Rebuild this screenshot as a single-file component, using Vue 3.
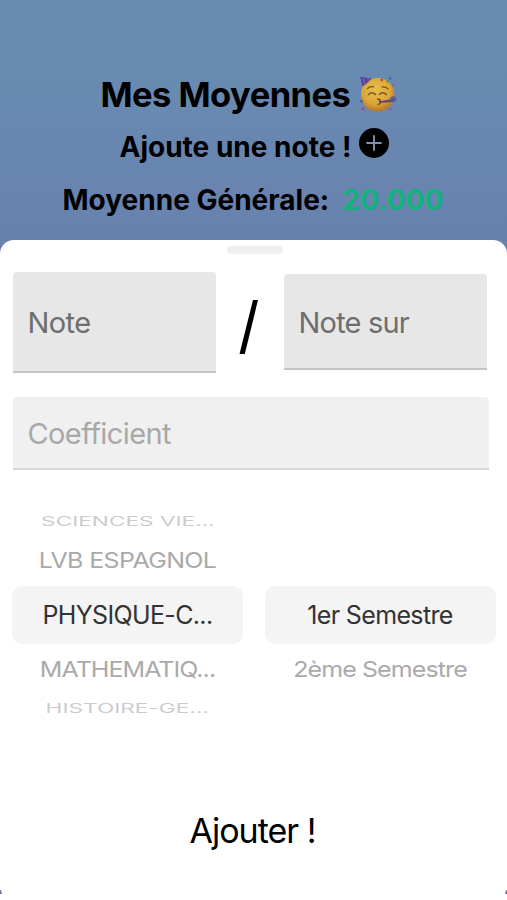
<script setup>
import { ref } from 'vue'

const subjects = [
  { label: 'SCIENCES VIE...', kind: 'far top' },
  { label: 'LVB ESPAGNOL', kind: 'near lvb' },
  { label: 'PHYSIQUE-C...', kind: 'selected' },
  { label: 'MATHEMATIQ...', kind: 'near math' },
  { label: 'HISTOIRE-GE...', kind: 'far bottom' },
]
const terms = [
  { label: '1er Semestre', kind: 'selected' },
  { label: '2ème Semestre', kind: 'near sem' },
]
const note = ref('')
const noteMax = ref('')
const coefficient = ref('')
</script>

<template>
  <main class="screen">
    <header class="header">
      <h1 class="title">
        <span>Mes Moyennes</span>
        <svg class="party" viewBox="0 0 38 38" aria-hidden="true">
          <defs>
            <radialGradient id="face" cx="45%" cy="35%" r="65%">
              <stop offset="0" stop-color="#e6c04c" />
              <stop offset="0.65" stop-color="#dba637" />
              <stop offset="1" stop-color="#b77528" />
            </radialGradient>
          </defs>
          <circle cx="18.7" cy="19.8" r="16.8" fill="url(#face)" />
          <path d="M1.2 1.8 12.3 3.6Q9.5 8 3.5 11.2Z" fill="#58409b" />
          <path d="m4.5 2.8 1.2 6.3M9 3.5l.5 3" stroke="#8160b4" stroke-width="1.3" />
          <path d="M8.5 13.5q2.5-2.4 6-1.6M23 11.9q3.5-.6 6 2" fill="none" stroke="#81501f" stroke-width="1.3" stroke-linecap="round" />
          <path d="M9.7 19.4q3-3.4 6.8 0M20.5 19.4q3-3.4 6.8 0" fill="none" stroke="#7d5424" stroke-width="1.5" stroke-linecap="round" />
          <path d="M18.5 24q4.2.4 2 2.4 2.8 1.8-1.3 3" fill="none" stroke="#7d411f" stroke-width="1.4" stroke-linecap="round" />
          <path d="m20.5 26.2 13-2.2.7 3-13 .9Z" fill="#65466f" />
          <circle cx="34.3" cy="24.2" r="2.9" fill="#5b509b" />
          <path d="M32.5 24q2-3 3.8-.4t-2 2" fill="none" stroke="#796aab" stroke-width=".8" />
          <path d="m21.3 4.2 2.2-.7.5 2.2-2 .8Z" fill="#b63d47" />
          <circle cx="31" cy="3.4" r="1.2" fill="#3e61ae" />
          <circle cx="34.5" cy="10" r="1" fill="#b84778" />
          <circle cx="28.5" cy="6.5" r="1" fill="#507d48" />
          <circle cx="2.5" cy="26.2" r="1.2" fill="#4752a0" />
          <circle cx="4" cy="33.5" r="1.5" fill="#b44368" />
          <circle cx="31" cy="34.5" r="1.2" fill="#9a56a1" />
        </svg>
      </h1>
      <div class="add-note">
        <span>Ajoute une note !</span>
        <svg class="plus" viewBox="0 0 30 30" aria-hidden="true">
          <circle cx="15" cy="15" r="15" />
          <path d="M15 8v14M8 15h14" fill="none" stroke="#7b92b2" stroke-width="1.9" stroke-linecap="round" />
        </svg>
      </div>
      <div class="average">
        <span class="average-label">Moyenne Générale:</span>
        <span class="score">20.000</span>
      </div>
    </header>

    <section class="sheet">
      <div class="handle"></div>
      <div class="grades">
        <input v-model="note" class="field note" placeholder="Note" />
        <svg class="slash" viewBox="0 0 20 56"><path d="M.5 55 14 1h5L5.8 55Z" /></svg>
        <input v-model="noteMax" class="field max" placeholder="Note sur" />
      </div>
      <input v-model="coefficient" class="field coefficient" placeholder="Coefficient" />
      <div class="pickers">
        <div class="picker">
          <div v-for="item in subjects" :key="item.label" class="option" :class="item.kind">
            <span>{{ item.label }}</span>
          </div>
        </div>
        <div class="picker terms">
          <div v-for="item in terms" :key="item.label" class="option" :class="item.kind">
            <span>{{ item.label }}</span>
          </div>
        </div>
      </div>
      <button class="submit">Ajouter !</button>
      <div class="edge"><i></i><i class="right"></i></div>
    </section>
  </main>
</template>

<style>
body { margin: 0; }
</style>

<style scoped>
* { box-sizing: border-box; }
.screen {
  width: 507px;
  height: 900px;
  overflow: hidden;
  font-family: Inter, "Liberation Sans", sans-serif;
  color: #000;
  background: linear-gradient(#698db1 0, #688ab1 90px, #6881ae 240px, #6780ae 270px);
}
.header { height: 240px; padding-top: 72px; font-weight: 700; white-space: nowrap; }
.title { height: 44px; margin: 0; padding-left: 100.5px; display: flex; align-items: center; font-size: 34.5px; line-height: 44px; letter-spacing: -.55px; }
.title span { width: 258.5px; padding-top: 2px; }
.party { width: 38px; height: 38px; margin-top: -1px; }
.add-note { height: 56px; padding-left: 119.5px; display: flex; align-items: center; font-size: 28px; }
.add-note span { width: 239.5px; padding-top: 5px; }
.plus { width: 30px; height: 30px; margin-top: -2px; }
.average { height: 54px; display: flex; align-items: center; padding: 2px 0 0 62.5px; font-size: 28px; }
.average-label { width: 280px; }
.score { color: #11b27c; }
.sheet { height: 660px; border-radius: 14px 14px 0 0; background: #fff; overflow: hidden; display: flex; flex-direction: column; }
.handle { width: 56px; height: 8px; flex: none; margin: 6px 0 0 226.5px; border-radius: 4px; background: #efefef; }
.grades { height: 101px; flex: none; margin-top: 18px; padding-left: 13px; display: flex; align-items: center; }
.field { border: 0; border-bottom: 2px solid #c4c4c4; border-radius: 4px 4px 0 0; outline: 0; padding: 2px 14.5px 0; background: #e7e7e7; font: 400 29px Inter, sans-serif; letter-spacing: -.6px; }
.field::placeholder { color: #6e6e6e; opacity: 1; }
.note { width: 203px; height: 101px; }
.slash { width: 20px; height: 56px; margin: 8px 25px 0 23px; }
.max { width: 203px; height: 96px; margin-top: -1px; padding-top: 3px; letter-spacing: -.8px; }
.coefficient { flex: none; width: 476px; height: 73px; margin: 24px 0 0 13px; background: #f0f0f0; border-color: #d7d7d7; }
.coefficient::placeholder { color: #a8a8a8; }
.pickers { height: 225px; flex: none; margin-top: 31px; padding-left: 12px; display: flex; gap: 21.5px; }
.picker { width: 231px; }
.terms { padding-top: 85px; }
.option { display: flex; align-items: center; justify-content: center; white-space: nowrap; font-size: 25px; letter-spacing: -.65px; }
.option span { display: block; }
.selected { height: 58px; background: #f4f4f4; border-radius: 10px; color: #333; }
.near { height: 48px; color: #aaa; }
.near span { transform: scaleY(.88); }
.lvb { padding-bottom: 4px; }
.math { padding-top: 2px; letter-spacing: -.95px; }
.sem { padding-top: 2px; letter-spacing: -.9px; }
.far { height: 37px; color: #ccc; letter-spacing: 0; }
.top { padding-top: 3px; }
.bottom { padding-bottom: 5px; }
.far span { transform: scale(.905, .5); }
.submit { height: 60px; width: 300px; margin: 74px 0 0 102.5px; border: 0; padding: 0; background: transparent; color: #000; font: 400 34px Inter, sans-serif; letter-spacing: -1px; }
.edge { flex: none; display: flex; justify-content: space-between; height: 4px; margin-top: 30px; }
.edge i { width: 2px; height: 4px; background: #7863ac; clip-path: polygon(0 0, 40% 0, 100% 100%, 0 100%); }
.edge .right { transform: scaleX(-1); }
</style>
